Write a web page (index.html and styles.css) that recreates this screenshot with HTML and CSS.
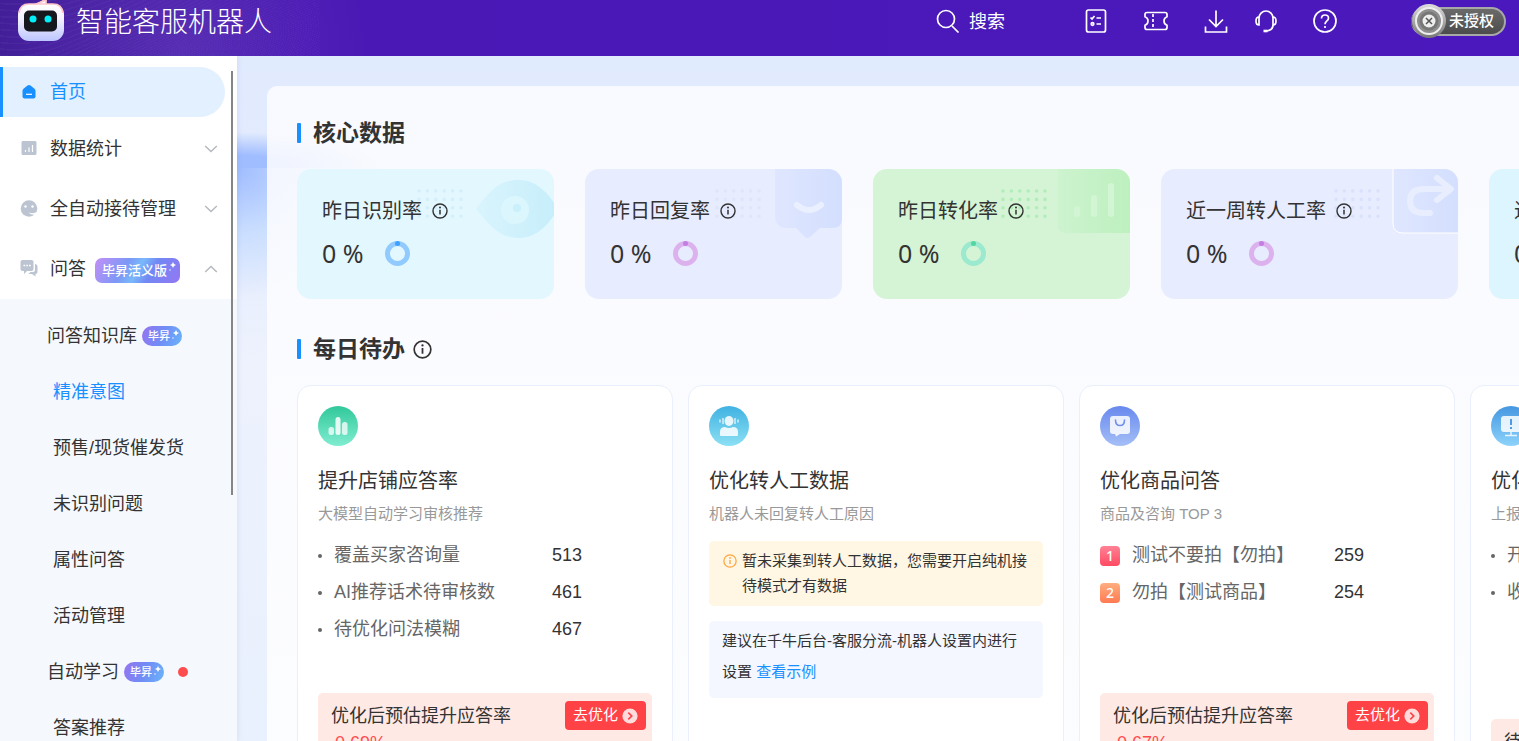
FILE: index.html
```html
<!DOCTYPE html>
<html lang="zh-CN">
<head>
<meta charset="utf-8">
<meta name="viewport" content="width=device-width, initial-scale=1">
<title>智能客服机器人</title>
<link rel="stylesheet" href="styles.css">
</head>
<body>
<svg class="defs" aria-hidden="true">
  <defs>
    <symbol id="info" viewBox="0 0 18 18">
      <circle cx="9" cy="9" r="7.9" fill="none" stroke="currentColor" stroke-width="1.6"/>
      <path d="M9 7.6v5.4" stroke="currentColor" stroke-width="1.7"/>
      <circle cx="9" cy="5.1" r="1.1" fill="currentColor"/>
    </symbol>
    <symbol id="chevron" viewBox="0 0 14 8"><path d="M1.2 1l5.800 5.600L12.800 1" fill="none" stroke="#b4b8be" stroke-width="1.4"/></symbol>
    <symbol id="spark" viewBox="0 0 8 10"><path d="M5 0l1 2 2 1-2 1-1 2-1-2-2-1 2-1z" fill="#fff"/><circle cx="2" cy="8" r="1" fill="#fff" opacity=".5"/></symbol>
    <symbol id="go" viewBox="0 0 16 16"><circle cx="8" cy="8" r="7.600" fill="#ffdcdc"/><path d="M6.300 4.700L9.700 8l-3.400 3.300" fill="none" stroke="#ff4245" stroke-width="1.700"/></symbol>
    <symbol id="dots" viewBox="0 0 48 32"><path d="M2 2h43M2 10.400h43M2 18.800h43M2 27.200h43" fill="none" stroke="currentColor" stroke-width="3.600" stroke-linecap="round" stroke-dasharray="0 8.400"/></symbol>
    <linearGradient id="g-logo" x1="0" y1="0" x2="0" y2="1"><stop offset="0" stop-color="#fff"/><stop offset=".4" stop-color="#f3f1ff"/><stop offset="1" stop-color="#bcc6ff"/></linearGradient>
    <linearGradient id="g-eye"><stop offset="0" stop-color="#d9f4fd"/><stop offset="1" stop-color="#c6eefb"/></linearGradient>
    <linearGradient id="g-blue"><stop offset="0" stop-color="#dfe6ff"/><stop offset="1" stop-color="#d3dffe"/></linearGradient>
    <linearGradient id="g-lime"><stop offset="0" stop-color="#cdf3cf"/><stop offset="1" stop-color="#bdf0bf"/></linearGradient>
    <linearGradient id="g-steel" x1="0" y1="0" x2="0" y2="1"><stop offset="0" stop-color="#ddd"/><stop offset="1" stop-color="#777"/></linearGradient>
  </defs>
</svg>

<header class="topbar">
  <div class="brand">
    <svg width="48" height="42" viewBox="0 0 48 42" aria-hidden="true">
      <path d="M18 5L29 0V-2" fill="#fff" stroke="#f3a2b4"/>
      <path d="M18 4.500L29 0v5" fill="#fff" stroke="#ffc5ca"/>
      <rect x="1" y="4" width="46" height="37" rx="11" fill="url(#g-logo)"/>
      <path d="M2 13Q3 4 12 4h24q9 0 10 9" fill="none" stroke="#ffc5ca"/>
      <rect x="7" y="10.500" width="33" height="21" rx="5" fill="#16181d"/>
      <circle cx="16" cy="19" r="3.500" fill="#04eef7"/><circle cx="31" cy="19" r="3.500" fill="#04eef7"/>
    </svg>
    <span class="brand-name">智能客服机器人</span>
  </div>
  <button class="search" type="button">
    <svg width="24" height="24" viewBox="0 0 24 24" aria-hidden="true"><circle cx="10" cy="10" r="8.500"/><path d="M16 17l6.500 6.500"/></svg>
    <span>搜索</span>
  </button>
  <nav class="tools" aria-label="工具">
    <button type="button" aria-label="任务"><svg width="24" height="24" viewBox="0 0 24 24"><rect x="2.500" y="1" width="19" height="22" rx="2"/><path d="M6.500 8.500L8 10l2.500-3M12.500 9H17M12.500 15H17"/><circle cx="8.500" cy="15" r="1.300"/></svg></button>
    <button type="button" aria-label="卡券"><svg width="26" height="24" viewBox="0 0 26 24"><path d="M4 3.500h18q2 0 2 2v2.200q-3 1-3 4.300t3 4.300v2.200q0 2-2 2H4q-2 0-2-2v-2.200q3-1 3-4.300T2 7.700V5.500q0-2 2-2z"/><path d="M10 5v15" stroke-dasharray="3 2"/></svg></button>
    <div class="tool-pair">
      <button type="button" aria-label="下载"><svg width="24" height="24" viewBox="0 0 24 24"><path d="M12 1.500v16M5 10.500l7 7 7-7M1.500 17.500v5.500h21v-5.500"/></svg></button>
      <button type="button" aria-label="客服"><svg width="24" height="24" viewBox="0 0 24 24"><path d="M5 9a7 7 0 0 1 14 0M19 16q0 5-6 6"/><path d="M5 8q-3 0-3 4t3 4zM19 8q3 0 3 4t-3 4z"/><path d="M9.500 22h4" stroke-width="2.600"/></svg></button>
    </div>
    <button type="button" aria-label="帮助"><svg width="24" height="24" viewBox="0 0 24 24"><circle cx="12" cy="12" r="11"/><path d="M8.500 9.500q0-3.500 3.500-3.500t3.500 3.200c0 2.600-3.500 2.800-3.500 6"/><path d="M12 17v2"/></svg></button>
  </nav>
  <button class="license" type="button">
    <svg width="36" height="36" viewBox="0 0 36 36" aria-hidden="true">
      <circle cx="18" cy="18" r="17" fill="url(#g-steel)"/><circle cx="18" cy="18" r="13" fill="#8f8f8f" stroke="#eee" stroke-width="2"/>
      <circle cx="18" cy="18" r="9.500" fill="#777"/><circle cx="18" cy="18" r="6.500" fill="#eee"/><path d="M15 15l6 6m0-6l-6 6" stroke="#555" stroke-width="1.500"/>
    </svg>
    <span>未授权</span>
  </button>
</header>

<div class="layout">
  <aside class="sidebar">
    <nav class="menu" aria-label="主菜单">
      <a class="menu-item active" href="#">
        <svg width="18" height="18" viewBox="0 0 18 18" aria-hidden="true"><path d="M2.500 8q0-1.500 1-2.300l4-3.200q1.500-1.200 3 0l4 3.200q1 .8 1 2.300v5.500q0 2-2 2h-9q-2 0-2-2z" fill="#1890ff"/><path d="M6 11.300h6" stroke="#fff" stroke-width="1.200"/></svg>
        <span>首页</span>
      </a>
      <a class="menu-item" href="#">
        <svg width="18" height="18" viewBox="0 0 18 18" aria-hidden="true"><rect x="1.500" y="1" width="15" height="14" rx="1.500" fill="#bcc4d1"/><path d="M5.500 12V10M9 12V7.500M12.500 12V5" stroke="#fff" stroke-width="1.200"/></svg>
        <span>数据统计</span>
        <svg class="arrow" width="14" height="8" aria-hidden="true"><use href="#chevron"/></svg>
      </a>
      <a class="menu-item" href="#">
        <svg width="18" height="18" viewBox="0 0 18 18" aria-hidden="true"><circle cx="9" cy="8.500" r="8.300" fill="#bcc4d1"/><circle cx="5.500" cy="6.500" r="1.200" fill="#fff"/><circle cx="12.500" cy="6.500" r="1.200" fill="#fff"/><path d="M8.500 12.500q5 2 9-1l-2 3q-4 1-7-2z" fill="#fff"/></svg>
        <span>全自动接待管理</span>
        <svg class="arrow" width="14" height="8" aria-hidden="true"><use href="#chevron"/></svg>
      </a>
      <a class="menu-item" href="#">
        <svg width="18" height="18" viewBox="0 0 18 18" aria-hidden="true"><path d="M2.500 0h9q2 0 2 2v7q0 2-2 2H7l-3 3V11H2.500q-2 0-2-2V2q0-2 2-2z" fill="#bcc4d1"/><path d="M15 4q2.500.2 2.500 2.500v5.500q0 2-2 2v2.500L12 14H8.500l2-2h2.500q2 0 2-2z" fill="#bcc4d1"/><path d="M3.500 5.500h1.700M6.300 5.500h1.700M9 5.500h1.700" stroke="#fff" stroke-width="1.700"/></svg>
        <span>问答</span>
        <b class="tag tag-large">毕昇活义版<svg width="8" height="10" aria-hidden="true"><use href="#spark"/></svg></b>
        <svg class="arrow up" width="14" height="8" aria-hidden="true"><use href="#chevron"/></svg>
      </a>
    </nav>
    <nav class="submenu" aria-label="问答">
      <a class="tagged" href="#">问答知识库<b class="tag">毕昇<svg width="8" height="10" aria-hidden="true"><use href="#spark"/></svg></b></a>
      <a class="current" href="#">精准意图</a>
      <a href="#">预售/现货催发货</a>
      <a href="#">未识别问题</a>
      <a href="#">属性问答</a>
      <a href="#">活动管理</a>
      <a class="tagged" href="#">自动学习<b class="tag">毕昇<svg width="8" height="10" aria-hidden="true"><use href="#spark"/></svg></b><i class="dot"></i></a>
      <a href="#">答案推荐</a>
    </nav>
    <div class="scroll-thumb"></div>
  </aside>

  <main class="main">
    <div class="panel">
      <h2 class="heading">核心数据</h2>
      <section class="kpis">
        <article class="kpi sky">
          <svg class="art" width="150" height="90" viewBox="0 0 150 90" aria-hidden="true"><use href="#dots" x="13" y="20" width="48" height="32" color="#d5effa"/><path d="M72 40C88 18 98 11 114 11s28 9 40 29c-12 20-24 29-40 29S88 60 72 40z" fill="url(#g-eye)" /><circle cx="111" cy="41" r="14" fill="#dcf6fe"/><circle cx="113" cy="39" r="4" fill="#c9f0fb"/></svg>
          <h3>昨日识别率 <svg width="16" height="16" aria-hidden="true"><use href="#info"/></svg></h3>
          <p>0 %<span class="ring"></span></p>
        </article>
        <article class="kpi lilac">
          <svg class="art" width="150" height="90" viewBox="0 0 150 90" aria-hidden="true"><use href="#dots" x="23" y="20" width="48" height="32" color="#dfe6fb"/><path d="M83 0h67v50q0 9-10 9h-12l-10 9q-3 2-5 0l-9-9h-9q-12 0-12-13z" fill="url(#g-blue)"/><path d="M105 36q12 10 24 0" fill="none" stroke="#eaf0ff" stroke-width="6" stroke-linecap="round"/></svg>
          <h3>昨日回复率 <svg width="16" height="16" aria-hidden="true"><use href="#info"/></svg></h3>
          <p>0 %<span class="ring"></span></p>
        </article>
        <article class="kpi green">
          <svg class="art" width="150" height="90" viewBox="0 0 150 90" aria-hidden="true"><use href="#dots" x="21" y="20" width="48" height="32" color="#b2edb9"/><path d="M78 0h72v64H86q-8 0-8-8z" fill="url(#g-lime)"/><path d="M97 40v5M114 29v16M131 17v28" stroke="#d2f6d3" stroke-width="6" stroke-linecap="round"/></svg>
          <h3>昨日转化率 <svg width="16" height="16" aria-hidden="true"><use href="#info"/></svg></h3>
          <p>0 %<span class="ring"></span></p>
        </article>
        <article class="kpi lilac wide">
          <svg class="art" width="150" height="90" viewBox="0 0 150 90" aria-hidden="true"><use href="#dots" x="26" y="20" width="48" height="32" color="#d9e1fb"/><path d="M85 -1v55q0 10 10 10h56V-1z" fill="url(#g-blue)" stroke="#fff"/><path d="M122 44h-6q-14 0-14-12t14-12h26M129 9l14 11-14 11" fill="none" stroke="#e9eeff" stroke-width="6" stroke-linecap="round" stroke-linejoin="round"/></svg>
          <h3>近一周转人工率 <svg width="16" height="16" aria-hidden="true"><use href="#info"/></svg></h3>
          <p>0 %<span class="ring"></span></p>
        </article>
        <article class="kpi cyan"><h3>近</h3><p>0 %</p></article>
      </section>

      <h2 class="heading">每日待办 <svg width="19" height="19" aria-hidden="true"><use href="#info"/></svg></h2>
      <section class="tasks">
        <article class="task">
          <svg class="badge mint" width="40" height="40" viewBox="0 0 40 40" aria-hidden="true"><g fill="#fff"><rect x="10.500" y="21" width="5.500" height="8" rx="2.500" opacity=".75"/><rect x="17.500" y="11" width="5" height="18" rx="2.500" opacity=".85"/><rect x="24" y="16" width="5.500" height="13" rx="2.500" opacity=".75"/></g></svg>
          <h3>提升店铺应答率</h3>
          <p class="note">大模型自动学习审核推荐</p>
          <ul class="rows">
            <li><span>覆盖买家咨询量</span><strong>513</strong></li>
            <li><span>AI推荐话术待审核数</span><strong>461</strong></li>
            <li><span>待优化问法模糊</span><strong>467</strong></li>
          </ul>
          <div class="gain"><div><h4>优化后预估提升应答率</h4><p>0.69%</p></div><button type="button">去优化<svg width="16" height="16" aria-hidden="true"><use href="#go"/></svg></button></div>
        </article>

        <article class="task">
          <svg class="badge aqua" width="40" height="40" viewBox="0 0 40 40" aria-hidden="true"><g fill="#fff" opacity=".85"><ellipse cx="20" cy="15" rx="4.500" ry="5"/><path d="M11 29v-3q0-5 5-5 4 2 8 0 5 0 5 5v3q0 1-1 1H12q-1 0-1-1z"/><path d="M11 13.500v3M14 12v6M26 12v6M29 13.500v3" stroke="#fff" stroke-width="1.300"/></g></svg>
          <h3>优化转人工数据</h3>
          <p class="note">机器人未回复转人工原因</p>
          <div class="alert"><svg width="14" height="14" aria-hidden="true"><use href="#info"/></svg><p>暂未采集到转人工数据，您需要开启纯机接待模式才有数据</p></div>
          <p class="advice">建议在千牛后台-客服分流-机器人设置内进行设置 <a href="#">查看示例</a></p>
        </article>

        <article class="task">
          <svg class="badge indigo" width="40" height="40" viewBox="0 0 40 40" aria-hidden="true"><path d="M13 10h14q3 0 3 3v12q0 3-3 3h-7l-4 2.500-1-2.500h-2q-3 0-3-3V13q0-3 3-3z" fill="#fff" opacity=".85"/><path d="M15.500 14q0 5.500 4.500 5.500t4.500-5.500" fill="none" stroke="#7390ef" stroke-width="1.600" stroke-linecap="round"/></svg>
          <h3>优化商品问答</h3>
          <p class="note">商品及咨询 TOP 3</p>
          <ol class="rows ranked">
            <li><i class="rank first">1</i><span>测试不要拍【勿拍】</span><strong>259</strong></li>
            <li><i class="rank second">2</i><span>勿拍【测试商品】</span><strong>254</strong></li>
          </ol>
          <div class="gain"><div><h4>优化后预估提升应答率</h4><p>0.67%</p></div><button type="button">去优化<svg width="16" height="16" aria-hidden="true"><use href="#go"/></svg></button></div>
        </article>

        <article class="task">
          <svg class="badge azure" width="40" height="40" viewBox="0 0 40 40" aria-hidden="true"><rect x="10" y="10" width="20" height="16" rx="3" fill="#fff" opacity=".85"/><path d="M20 13v6M20 21v2" stroke="#4a9de4" stroke-width="2"/><path d="M20 26v3M14 29.500h12" stroke="#e6f5ff" stroke-width="1.500"/></svg>
          <h3>优化</h3>
          <p class="note">上报</p>
          <ul class="rows tall"><li><span>开</span></li><li><span>收</span></li></ul>
          <div class="gain"><h4>待</h4></div>
        </article>
      </section>
    </div>
  </main>
</div>
</body>
</html>
```

FILE: styles.css
```css
* { box-sizing: border-box; }
body, h2, h3, h4, p, ul, ol { margin: 0; padding: 0; }
body {
  display: flex;
  flex-direction: column;
  height: 100vh;
  overflow: hidden;
  font: 18px/1.5 "Liberation Sans", "Noto Sans CJK SC", sans-serif;
  color: #333;
}
h3, h4 { font-weight: 400; }
ul, ol { list-style: none; }
svg { flex: none; }
a { color: inherit; text-decoration: none; }
button { margin: 0; padding: 0; border: 0; background: none; font: inherit; color: inherit; cursor: pointer; }
i { font-style: normal; }
.defs { position: absolute; width: 0; height: 0; }

/* top bar */
.topbar {
  display: flex;
  flex: none;
  align-items: center;
  height: 56px;
  padding: 0 13px 14px 17px;
  color: #fff;
  background:
    radial-gradient(circle at 12% 100%, rgba(126, 92, 205, .3), transparent 14%),
    repeating-radial-gradient(ellipse at 5% 160%, rgba(255, 255, 255, .03) 0 1px, transparent 1px 4px) 0 0 / 320px 56px no-repeat,
    linear-gradient(90deg, #421e98, #4a18b4 20%, #4b18bd);
}
.topbar svg { fill: none; stroke: #fff; stroke-width: 1.7; }
.brand svg, .license svg { stroke: none; }
.brand { display: flex; align-items: center; gap: 11px; margin-right: auto; }
.brand-name { padding-top: 3px; font-size: 28px; font-weight: 300; line-height: 40px; }
.search { display: flex; align-items: center; gap: 9px; margin-right: 79px; }
.search span { padding-top: 3px; }
.tools { display: flex; gap: 35px; margin-right: 74px; }
.tools button { display: flex; }
.tool-pair { display: flex; gap: 26px; }
.license {
  display: flex;
  align-items: center;
  height: 29px;
  padding-right: 10px;
  border: 2px solid #a8a8a8;
  border-left: 0;
  border-radius: 15px;
  background: linear-gradient(#6a6a6a, #4c4c4c);
  font-size: 15px;
  font-weight: 500;
}
.license svg { margin-right: 2px; }

.layout { display: flex; flex: 1; min-height: 0; }

/* sidebar */
.sidebar {
  position: relative;
  z-index: 1;
  display: flex;
  flex: none;
  flex-direction: column;
  width: 237px;
  overflow: hidden;
  background: #fff;
  box-shadow: 0 0 6px rgba(60, 90, 160, .14);
}
.menu { padding-top: 11px; }
.menu-item { display: flex; align-items: center; height: 60px; padding: 0 19px 0 20px; }
.menu-item > svg:first-child { margin-right: 12px; }
.menu-item.active {
  width: 225px;
  height: 50px;
  margin-bottom: 2px;
  padding-left: 17px;
  border-left: 3px solid #1890ff;
  border-radius: 0 25px 25px 0;
  background: #e2f0ff;
  color: #1890ff;
}
.arrow { margin-left: auto; }
.arrow.up { transform: rotate(180deg); }
.tag {
  display: inline-flex;
  align-items: center;
  height: 20px;
  margin-left: 5px;
  padding: 0 3px 0 6px;
  border-radius: 10px;
  background: linear-gradient(110deg, #9674ef, #718cf6 50%, #69b5fa);
  color: #fff;
  font-size: 11px;
  font-weight: 500;
}
.tag svg { align-self: flex-start; margin: 4px 0 0 1px; }
.tag-large {
  height: 25px;
  margin: 3px 0 0 9px;
  padding: 0 4px 0 7px;
  border-radius: 7px;
  background: linear-gradient(120deg, #c38ff6, #7c98f6 35%, #79b9fa 50%, #7188f3 65%, #9477f4);
  font-size: 13px;
}
.submenu { flex: 1; padding-top: 9px; background: #f5f8fc; }
.submenu a { display: flex; align-items: center; height: 56px; padding-left: 53px; }
.submenu .tagged { padding-left: 47px; }
.submenu .current { color: #1890ff; }
.dot { width: 10px; height: 10px; margin-left: 14px; border-radius: 50%; background: #ff4d4f; }
.scroll-thumb { position: absolute; top: 15px; right: 4px; width: 2px; height: 424px; background: #858585; }

/* content */
.main {
  flex: 1;
  min-width: 0;
  padding: 30px 0 0 30px;
  overflow: hidden;
  background:
    radial-gradient(ellipse 150px 36px at 0 100%, #a0bdff 35%, rgba(190, 210, 255, 0)) 0 0 / 160px 112px no-repeat,
    radial-gradient(ellipse 150px 130px at 0 0, #a0bdff, rgba(190, 216, 255, .7) 50%, rgba(225, 234, 254, 0)) 0 112px / 160px 140px no-repeat,
    linear-gradient(#e1ebfe, #e4ebfd 20%, #edf2fd 45%, #e9f1fe);
}
.panel {
  min-height: 100%;
  padding: 32px 0 0 30px;
  border-radius: 10px 0 0;
  background: linear-gradient(rgba(252, 252, 255, .87), rgba(254, 254, 255, .9));
}
.heading { display: flex; align-items: center; gap: 8px; margin-bottom: 21px; font-size: 23px; line-height: 30px; }
.heading::before { content: ""; width: 4px; height: 20px; margin-right: 4px; border-radius: 1px; background: #1890ff; }
.kpis { display: flex; gap: 31px; margin-bottom: 35px; }
.kpi { position: relative; flex: none; width: 257px; padding: 27px 25px 29px; overflow: hidden; border-radius: 14px; }
.kpi.wide { width: 297px; }
.kpi.sky { background: #e3f7ff; --ring: #91caff; --mark: #419fff; }
.kpi.lilac { background: #e8ecff; --ring: #dcb2ee; --mark: #c27ee3; }
.kpi.green { background: #d5f4d5; --ring: #9be9ce; --mark: #53d6a2; }
.kpi.cyan { background: #dcf5ff; }
.art { position: absolute; top: 0; right: 0; }
.kpi h3, .kpi p { position: relative; display: flex; align-items: center; }
.kpi h3 { gap: 10px; margin-bottom: 10px; font-size: 20px; line-height: 30px; }
.kpi p { gap: 21px; font: 25px/34px "Noto Sans", sans-serif; }
.ring { width: 25px; height: 25px; border: 5px solid var(--ring); border-radius: 50%; }
.ring::before { content: ""; position: absolute; width: 5px; height: 5px; margin: -5px 0 0 5px; border-radius: 50%; background: var(--mark); }

.tasks { display: flex; gap: 15px; }
.task {
  flex: none;
  width: 376px;
  min-height: 400px;
  padding: 20px;
  border: 1px solid #e9effd;
  border-radius: 14px;
  background: #fff;
}
.badge { display: block; margin-bottom: 20px; border-radius: 50%; }
.mint { background: linear-gradient(#31c89b, #80edd0); }
.aqua { background: linear-gradient(#40b2e2, #8ce0f4); }
.indigo { background: linear-gradient(#6889ee, #a5bff6); }
.azure { background: linear-gradient(#4497e1, #8dd3fa); }
.task h3 { margin-bottom: 8px; font-size: 20px; line-height: 30px; }
.note { color: #999; font-size: 15px; line-height: 20px; }
.rows { min-height: 148px; margin: 13px 0 8px; color: #666; }
.rows.tall { min-height: 174px; }
.rows li { display: grid; grid-template-columns: 16px 1fr 100px; align-items: center; height: 37px; }
.rows li::before { content: ""; width: 4px; height: 4px; border-radius: 50%; background: #666; }
.rows.ranked li { grid-template-columns: 32px 1fr 100px; }
.rows.ranked li::before { content: none; }
.rows strong { color: #333; font-weight: 400; }
.rank { width: 20px; height: 20px; border-radius: 4px; color: #fff; font: 500 14px/19px "Noto Sans", sans-serif; text-align: center; }
.first { background: linear-gradient(#ff8295, #ff4a62); }
.second { background: linear-gradient(#ffad80, #ff7a50); }
.gain {
  display: flex;
  align-items: flex-start;
  justify-content: space-between;
  padding: 8px 6px 12px 13px;
  border-radius: 5px;
  background: #ffe9e4;
}
.gain h4 { font-size: 18px; line-height: 30px; }
.gain p { padding-left: 4px; color: #ff4d4f; line-height: 24px; }
.gain button { display: flex; align-items: center; gap: 4px; height: 29px; padding: 0 8px; border-radius: 4px; background: #ff4245; color: #fff; font-size: 15px; }
.alert, .advice { border-radius: 5px; font-size: 15px; }
.alert { display: flex; gap: 5px; margin: 17px 0 15px; padding: 7px 13px 8px 14px; background: #fff6e4; line-height: 25px; }
.alert svg { margin-top: 6px; color: #ffa53d; }
.advice { padding: 4px 13px 11px; background: #f4f7ff; line-height: 31px; }
.advice a { color: #1890ff; }
```
